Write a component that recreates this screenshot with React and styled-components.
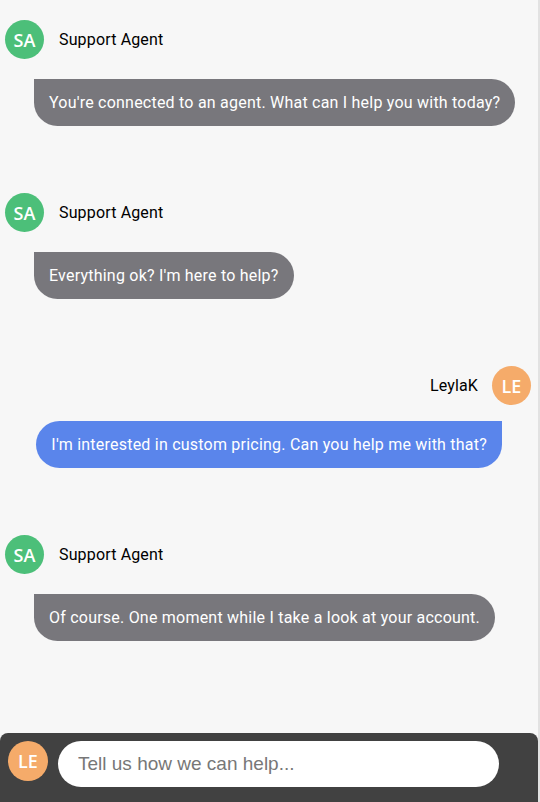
import React from "react";
import styled, { createGlobalStyle } from "styled-components";

const Global = createGlobalStyle`
  html, body { margin: 0; padding: 0; background: #f7f7f7; }
  * { box-sizing: border-box; }
`;

const Page = styled.div`
  width: 540px;
  height: 802px;
  display: flex;
  flex-direction: column;
  background: #f7f7f7;
  border-right: 2px solid #e2e2e2;
  overflow: hidden;
`;

const Thread = styled.div`
  flex: 1;
  display: flex;
  flex-direction: column;
  padding-top: 20px;
`;

const Group = styled.div`
  display: flex;
  flex-direction: column;
  align-items: ${(p) => (p.$mine ? "flex-end" : "flex-start")};
  margin-bottom: 67px;
`;

const Header = styled.div`
  display: flex;
  align-items: center;
  flex-direction: ${(p) => (p.$mine ? "row-reverse" : "row")};
  gap: ${(p) => (p.$mine ? "14px" : "15px")};
  padding: ${(p) => (p.$mine ? "0 7px 0 0" : "0 0 0 5px")};
  margin-bottom: ${(p) => (p.$mine ? "16px" : "20px")};
`;

const Avatar = styled.div`
  width: ${(p) => p.$size || 39}px;
  height: ${(p) => p.$size || 39}px;
  border-radius: 50%;
  flex: none;
  display: flex;
  align-items: center;
  justify-content: center;
  background: ${(p) => p.$color};
  color: #fff;
  font-family: "Open Sans", "Noto Sans", sans-serif;
  font-size: 18px;
  font-weight: 600;
  letter-spacing: 0.2px;
`;

const Name = styled.div`
  font-family: Roboto, "Noto Sans", sans-serif;
  font-size: 16px;
  letter-spacing: 0.15px;
  color: #000;
`;

const Bubble = styled.div`
  font-family: Roboto, "Noto Sans", sans-serif;
  font-size: 16px;
  line-height: 21px;
  letter-spacing: 0.22px;
  color: #fff;
  padding: 13px 15px;
  background: ${(p) => (p.$mine ? "#5a85eb" : "#78777c")};
  border-radius: ${(p) => (p.$mine ? "24px 0 24px 24px" : "0 24px 24px 24px")};
  margin: ${(p) => (p.$mine ? "0 36px 0 0" : "0 0 0 34px")};
`;

const Composer = styled.div`
  height: 69px;
  flex: none;
  width: 538px;
  background: #414141;
  border-radius: 8px 8px 0 0;
  display: flex;
  align-items: flex-start;
  gap: 10px;
  padding: 8px 0 0 8px;
`;

const Input = styled.input`
  width: 441px;
  height: 46px;
  border: none;
  outline: none;
  border-radius: 23px;
  background: #fff;
  padding: 0 20px;
  font-family: "Liberation Sans", Arial, sans-serif;
  font-size: 19px;
  color: #333;
  &::placeholder { color: #777; }
`;

const GREEN = "#4cbf79";
const ORANGE = "#f5ab6a";

const messages = [
  { mine: false, name: "Support Agent", initials: "SA", text: "You're connected to an agent. What can I help you with today?" },
  { mine: false, name: "Support Agent", initials: "SA", text: "Everything ok? I'm here to help?" },
  { mine: true, name: "LeylaK", initials: "LE", text: "I'm interested in custom pricing. Can you help me with that?" },
  { mine: false, name: "Support Agent", initials: "SA", text: "Of course. One moment while I take a look at your account." },
];

export default function App() {
  return (
    <>
      <Global />
      <Page>
        <Thread>
          {messages.map((m, i) => (
            <Group key={i} $mine={m.mine}>
              <Header $mine={m.mine}>
                <Avatar $color={m.mine ? ORANGE : GREEN}>{m.initials}</Avatar>
                <Name>{m.name}</Name>
              </Header>
              <Bubble $mine={m.mine}>{m.text}</Bubble>
            </Group>
          ))}
        </Thread>
        <Composer>
          <Avatar $color={ORANGE} $size={40}>LE</Avatar>
          <Input placeholder="Tell us how we can help..." />
        </Composer>
      </Page>
    </>
  );
}
